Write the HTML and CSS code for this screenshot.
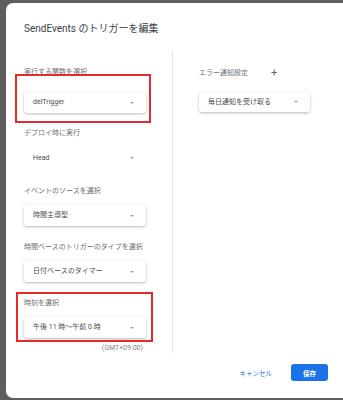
FILE: index.html
```html
<!DOCTYPE html>
<html lang="ja">
<head>
    <meta charset="UTF-8">
    <meta name="viewport" content="width=device-width, initial-scale=1.0">
    <title>SendEvents のトリガーを編集</title>
    <link rel="stylesheet" href="styles.css">
</head>
<body>

    <div class="dialog">
        <h1 class="dialog-title">SendEvents のトリガーを編集</h1>

        <div class="columns">
            <div class="col-left">
                <div class="field field-first marked-one">
                    <div class="field-label">実行する関数を選択</div>
                    <div class="select">delTrigger<span class="arrow"></span></div>
                </div>
                <div class="field field-flat">
                    <div class="field-label">デプロイ時に実行</div>
                    <div class="select select-flat">Head<span class="arrow"></span></div>
                </div>
                <div class="field">
                    <div class="field-label">イベントのソースを選択</div>
                    <div class="select">時間主導型<span class="arrow"></span></div>
                </div>
                <div class="field">
                    <div class="field-label">時間ベースのトリガーのタイプを選択</div>
                    <div class="select">日付ベースのタイマー<span class="arrow"></span></div>
                </div>
                <div class="field field-last marked-two">
                    <div class="field-label">時刻を選択</div>
                    <div class="select">午後 11 時～午前 0 時<span class="arrow"></span></div>
                </div>
                <div class="tz">(GMT+09:00)</div>
            </div>

            <div class="col-right">
                <div class="notify-row">
                    <span class="field-label">エラー通知設定</span>
                    <span class="plus">+</span>
                </div>
                <div class="select select-wide">毎日通知を受け取る<span class="arrow"></span></div>
            </div>
        </div>

        <div class="actions">
            <button class="btn-text">キャンセル</button>
            <button class="btn-save">保存</button>
        </div>
    </div>

</body>
</html>
```

FILE: styles.css
```css
body {
    margin: 0;
    padding: 3px 0 0 6px;
    height: 400px;
    box-sizing: border-box;
    overflow: hidden;
    background-color: #5e5e5e;
    font-family: Roboto, "Noto Sans CJK JP", sans-serif;
}

.dialog {
    position: relative;
    background-color: #fff;
    border-radius: 7px 0 0 7px;
    height: 395px;
    box-sizing: border-box;
    padding: 20px 0 0 18px;
}

.dialog-title {
    margin: 0 0 15px;
    font-size: 10px;
    line-height: 12px;
    font-weight: normal;
    color: #3c4043;
}

.columns {
    display: flex;
    height: 303px;
}

.col-left {
    width: 148px;
    padding-top: 17px;
}

.col-right {
    flex: 1;
    border-left: 1px solid #e3e3e3;
    padding: 18px 0 0 26px;
}

.field {
    position: relative;
    margin-bottom: 16px;
}

.field-label {
    font-size: 7px;
    line-height: 10px;
    color: #6b6f74;
    margin-bottom: 9px;
}

.field-first {
    margin-bottom: 15px;
}

.field-first .field-label {
    margin-bottom: 15px;
}

.field-flat {
    margin-bottom: 18px;
}

.field-flat .field-label {
    margin-bottom: 10px;
}

.field-last {
    margin-bottom: 5px;
}

.select {
    position: relative;
    width: 122px;
    height: 21px;
    box-sizing: border-box;
    padding-left: 9px;
    font-size: 7px;
    line-height: 21px;
    color: #4a4e52;
    background-color: #fff;
    border-radius: 3px;
    box-shadow: 0 1px 3px rgba(0, 0, 0, 0.28);
}

.select-flat {
    height: 20px;
    line-height: 20px;
    box-shadow: none;
}

.select-wide {
    width: 111px;
    height: 20px;
    line-height: 20px;
}

.arrow {
    position: absolute;
    right: 12px;
    top: 50%;
    margin-top: -1px;
    border-left: 2px solid transparent;
    border-right: 2px solid transparent;
    border-top: 2.5px solid #a0a4a8;
}

.marked-one::after,
.marked-two::after {
    content: "";
    position: absolute;
    border: 2px solid #e32b2b;
    box-sizing: border-box;
}

.marked-one::after {
    left: -9px;
    top: 7px;
    width: 136px;
    height: 49px;
}

.marked-two::after {
    left: -8px;
    top: -6px;
    width: 137px;
    height: 50px;
}

.tz {
    width: 119px;
    text-align: right;
    font-size: 7px;
    line-height: 10px;
    color: #80868b;
}

.notify-row {
    display: flex;
    align-items: center;
    gap: 23px;
    margin-bottom: 14px;
}

.notify-row .field-label {
    margin-bottom: 0;
}

.plus {
    font-size: 11px;
    line-height: 10px;
    color: #5f6368;
}

.actions {
    display: flex;
    justify-content: flex-end;
    align-items: center;
    gap: 19px;
    margin-top: 11px;
    padding-right: 15px;
}

.btn-text {
    border: none;
    background: none;
    padding: 0;
    font-family: inherit;
    font-size: 6.5px;
    color: #1a73e8;
}

.btn-save {
    width: 37px;
    height: 17px;
    border: none;
    border-radius: 3px;
    padding: 0;
    background-color: #1a73e8;
    color: #fff;
    font-family: inherit;
    font-size: 6.5px;
    font-weight: bold;
}
```
